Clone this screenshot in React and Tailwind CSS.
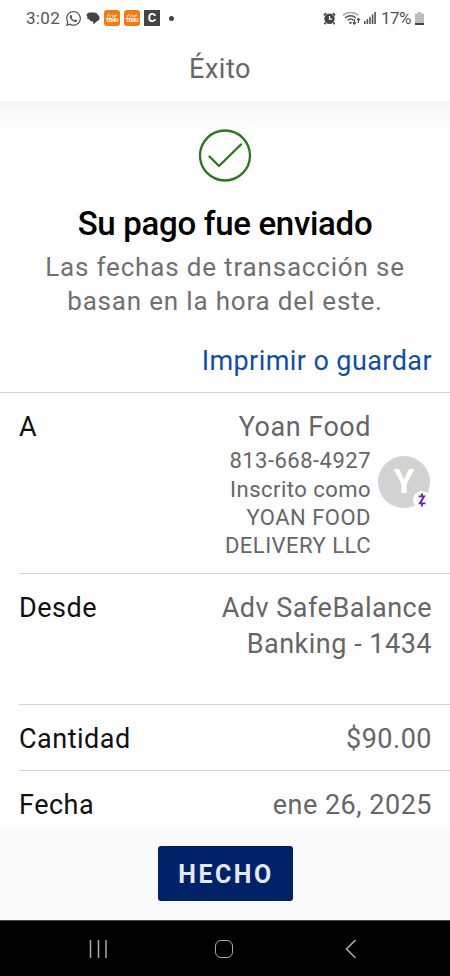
import React from 'react';
import { FaWhatsapp } from 'react-icons/fa';

const TemuIcon = () => (
  <div className="flex h-4 w-4 flex-col items-center justify-center rounded-[3px] bg-[#f27a14] font-bold text-white">
    <svg className="h-[4px] w-[12px]" viewBox="0 0 13 5" fill="none" stroke="currentColor" strokeWidth="1">
      <path d="M0.5 4.5L1.5 1h2M4 4.5V2M5.5 1.5h2v3M9 4l1-3M11 3.5V1.5h2" />
    </svg>
    <span className="text-[5px] leading-[5px] tracking-[-0.3px]">TEMU</span>
  </div>
);

const ChatIcon = () => (
  <svg className="h-[13px] w-[14px]" viewBox="0 0 14 13" fill="#444">
    <path d="M4 0.5h4.5a3.8 3.8 0 0 1 3.3 2.2A3.5 3.5 0 0 1 11 9.2L7.2 12.5V9.4H6A3.6 3.6 0 0 1 2.9 7L0.8 6.8 1.7 5.3A3.2 3.2 0 0 1 0.6 2.5 3.5 3.5 0 0 1 4 0.5z" />
  </svg>
);

const AlarmIcon = () => (
  <svg className="h-[13px] w-[13px]" viewBox="0 0 13 13" fill="none">
    <circle cx="6.5" cy="6.8" r="5.2" fill="#444" />
    <path d="M0.8 3.4L3.2 1.2M12.2 3.4L9.8 1.2M2.6 10.6l-1.2 1.6M10.4 10.6l1.2 1.6" stroke="#444" strokeWidth="1.7" />
    <path d="M6.5 4v3.1h2.6" stroke="#fff" strokeWidth="1.2" />
  </svg>
);

const WifiIcon = () => (
  <svg className="h-[14px] w-[19px]" viewBox="0 0 19 14" fill="none" strokeWidth="1.5">
    <path d="M1 4.4C5 0.4 12 0.4 16 4.4" stroke="#aaa" />
    <path d="M3.2 7c3-2.9 7.7-2.9 10.7 0" stroke="#555" />
    <path d="M5.6 9.4c1.8-1.7 4.2-1.7 6 0" stroke="#555" />
    <circle cx="8.5" cy="11.8" r="1.2" fill="#555" />
    <path d="M12.4 8.2v4.8M10.9 11.4l1.5 1.7 1.5-1.7M16.4 12V7.6M14.9 9.2l1.5-1.7 1.5 1.7" stroke="#444" strokeWidth="1.1" />
  </svg>
);

const SignalIcon = () => (
  <svg className="h-3 w-3" viewBox="0 0 12 12" fill="#555">
    <rect x="0" y="9" width="1.6" height="3" />
    <rect x="2.6" y="7" width="1.6" height="5" />
    <rect x="5.2" y="4.8" width="1.6" height="7.2" />
    <rect x="7.8" y="2.4" width="1.6" height="9.6" />
    <rect x="10.3" y="0" width="1.6" height="12" />
  </svg>
);

const StatusBar = () => (
  <div className="flex h-9 items-center pr-[26px] pl-[26px] text-[#555]">
    <span className="w-[34px] text-[17px] leading-none tracking-[0.3px]">3:02</span>
    <FaWhatsapp className="ml-[5px] h-[17px] w-[17px]" />
    <div className="ml-[4px]"><ChatIcon /></div>
    <div className="ml-[4px] flex gap-1">
      <TemuIcon />
      <TemuIcon />
      <div className="flex h-4 w-4 items-center justify-center bg-[#444] text-[13px] font-bold text-white">C</div>
    </div>
    <div className="ml-[9px] h-[5px] w-[5px] rounded-full bg-[#444]" />
    <div className="ml-auto flex items-center">
      <AlarmIcon />
      <div className="ml-[6px]"><WifiIcon /></div>
      <div className="ml-[3px]"><SignalIcon /></div>
      <span className="ml-[5px] w-[31px] text-[17px] leading-none tracking-[-0.5px]">17%</span>
      <svg className="ml-[3px] h-[13px] w-[9px]" viewBox="0 0 9 13">
        <path d="M3 0h3v1.5H9V13H0V1.5h3z" fill="#bdbdbd" />
        <path d="M0 11h9v2H0z" fill="#444" />
      </svg>
    </div>
  </div>
);

const Row = ({ label, children, className = '' }) => (
  <div className={`ml-[19px] flex shrink-0 justify-between border-[#d4d4d4] pr-[18px] text-[27px] leading-9 tracking-[0.5px] ${className}`}>
    <span className="text-[#111]">{label}</span>
    <div className="text-right text-[#666]">{children}</div>
  </div>
);

const Avatar = () => (
  <div className="relative mt-[47px] mr-[2px] ml-[7px] flex h-[52px] w-[52px] items-center justify-center rounded-full bg-[#d3d3d3] text-[33px] font-bold tracking-normal text-white">
    Y
    <div className="absolute right-[-1px] bottom-[-1px] flex h-[18px] w-[18px] items-center justify-center rounded-full bg-white">
      <svg className="h-[14px] w-[8px]" viewBox="0 0 8 14" fill="none" stroke="#6a1fb8" strokeWidth="1.9">
        <path d="M0.6 3.4h5.4L1.9 10.4h5.6M4 0.6v2.8M4 10.4v3" />
      </svg>
    </div>
  </div>
);

const NavBar = () => (
  <div className="grid h-14 shrink-0 grid-cols-[196px_56px_1fr] items-center border-t border-[#444] bg-black text-[#aaa]">
    <svg className="ml-[89px] h-[18px] w-[19px]" viewBox="0 0 19 18" stroke="currentColor" strokeWidth="1.5">
      <path d="M1.5 0v18M9.5 0v18M17 0v18" />
    </svg>
    <div className="ml-[19px] h-[18px] w-[18px] rounded-[6px] border-[1.5px] border-[#aaa]" />
    <svg className="ml-[93px] h-5 w-3" viewBox="0 0 12 20" fill="none" stroke="currentColor" strokeWidth="1.6">
      <path d="M10.5 1L1.5 10l9 9" />
    </svg>
  </div>
);

const App = () => (
  <div className="flex h-[976px] w-[450px] flex-col overflow-hidden bg-[#fefefe] font-[Roboto,sans-serif]">
    <header className="h-[101px] shrink-0 bg-white">
      <StatusBar />
      <h1 className="mt-[15px] pr-[10px] text-center text-[27px] leading-9 tracking-[0.5px] text-[#666]">Éxito</h1>
    </header>

    <main className="flex min-h-0 flex-1 flex-col overflow-hidden">
      <div className="h-[28px] shrink-0 bg-linear-to-b from-[#f5f5f5] to-[#fefefe]" />
      <svg className="mx-auto h-[53px] w-[53px] shrink-0" viewBox="0 0 53 53" fill="none" stroke="#27791a" strokeWidth="2.3">
        <circle cx="26" cy="26.5" r="25" />
        <path d="M10.5 27.5L20 37L42 15.5" strokeLinecap="round" />
      </svg>
      <h2 className="mt-[22px] shrink-0 text-center text-[33px] leading-10 font-medium tracking-[-0.3px] text-black">Su pago fue enviado</h2>
      <p className="mt-[6px] shrink-0 text-center text-[26px] leading-[34px] tracking-[0.82px] text-[#707070]">
        Las fechas de transacción se<br />basan en la hora del este.
      </p>
      <div className="mt-[25px] h-[50px] shrink-0 border-b border-[#d4d4d4] pr-[18px] text-right">
        <a className="text-[27px] leading-9 tracking-[0.42px] text-[#0f4fa3]">Imprimir o guardar</a>
      </div>

      <Row label="A" className="h-[181px] border-b pt-[16px]">
        <div className="flex">
          <div>
            <div>Yoan Food</div>
            <div className="text-[22px] leading-7 tracking-[0.48px]">
              <div className="pb-[1px] pt-[2px]">813-668-4927</div>
              <div>Inscrito como<br />YOAN FOOD<br />DELIVERY LLC</div>
            </div>
          </div>
          <Avatar />
        </div>
      </Row>
      <Row label="Desde" className="h-[131px] border-b pt-[16px]">
        Adv SafeBalance<br />Banking - 1434
      </Row>
      <Row label="Cantidad" className="h-[66px] border-b pt-[16px]">$90.00</Row>
      <Row label="Fecha" className="pt-[16px]">ene 26, 2025</Row>
    </main>

    <footer className="flex h-[92px] shrink-0 items-center justify-center bg-[#fafafa] pb-px">
      <button className="h-[55px] w-[135px] rounded-[3px] bg-[#012169] pt-[3px] pl-[2px] text-[25px] font-bold tracking-[2.5px] text-[#e4e9f5]">
        HECHO
      </button>
    </footer>
    <NavBar />
  </div>
);

export default App;
